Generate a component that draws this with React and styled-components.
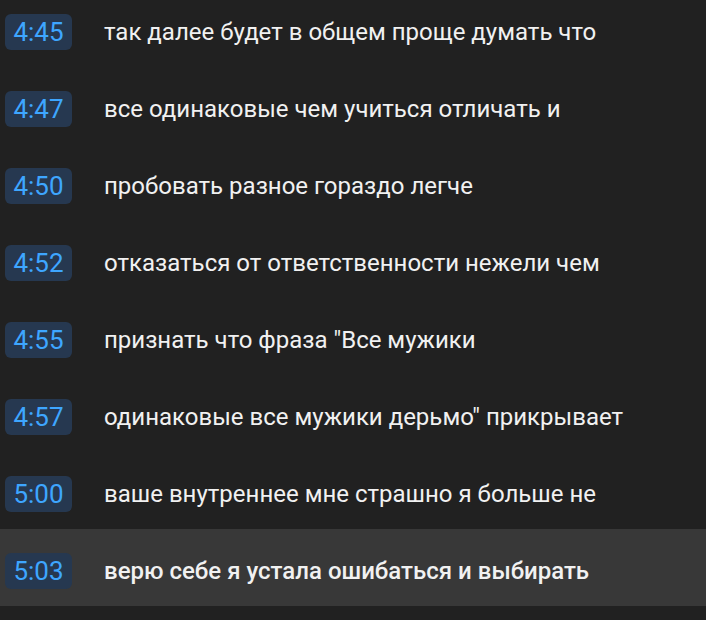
import React from 'react'
import { styled, createGlobalStyle } from 'styled-components'

const lines = [
  ['4:45', 'так далее будет в общем проще думать что'],
  ['4:47', 'все одинаковые чем учиться отличать и'],
  ['4:50', 'пробовать разное гораздо легче'],
  ['4:52', 'отказаться от ответственности нежели чем'],
  ['4:55', 'признать что фраза "Все мужики'],
  ['4:57', 'одинаковые все мужики дерьмо" прикрывает'],
  ['5:00', 'ваше внутреннее мне страшно я больше не'],
  ['5:03', 'верю себе я устала ошибаться и выбирать'],
]

function App() {
  return (
    <>
      <Global />
      <Panel>
        <List>
          {lines.map(([time, text], i) => (
            <Row key={time} $active={i === lines.length - 1}>
              <Stamp>{time}</Stamp>
              <Caption $active={i === lines.length - 1}>{text}</Caption>
            </Row>
          ))}
        </List>
      </Panel>
    </>
  )
}

export default App

const Global = createGlobalStyle`
body {
  margin: 0;
  background: #212121;
  font-family: Roboto, "Noto Sans", sans-serif;
}
`
const Panel = styled.div`
width: 706px;
height: 620px;
overflow: hidden;
background: #212121;
`
const List = styled.div`
display: flex;
flex-direction: column;
margin-top: -10px;
`
const Row = styled.div`
display: flex;
align-items: flex-start;
height: 77px;
box-sizing: border-box;
padding: 24px 0 0 5px;
background: ${p => (p.$active ? '#383838' : 'transparent')};
`
const Stamp = styled.div`
width: 67px;
height: 36px;
box-sizing: border-box;
display: flex;
align-items: center;
justify-content: center;
border-radius: 6px;
background: #263850;
color: #3ea6ff;
font-size: 26px;
line-height: 36px;
`
const Caption = styled.div`
margin-left: 32px;
color: #f1f1f1;
font-size: 24px;
line-height: 36px;
font-weight: ${p => (p.$active ? 500 : 400)};
white-space: nowrap;
`
